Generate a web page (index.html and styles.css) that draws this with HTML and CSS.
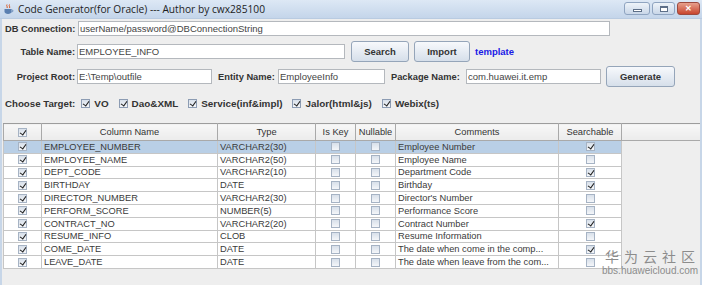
FILE: index.html
```html
<!DOCTYPE html>
<html lang="en">
<head>
  <meta charset="UTF-8" />
  <title>Code Generator(for Oracle)</title>
  <link rel="stylesheet" href="styles.css">
</head>
<body>
  <div class="window">
    <!-- Title bar -->
    <div class="titlebar">
      <svg class="app-icon" width="11" height="11" viewBox="0 0 11 11">
        <path d="M4 0.5 C3 2 5 2.5 4 4" stroke="#d9541e" stroke-width="1" fill="none"/>
        <path d="M6.5 0.5 C5.5 2 7.5 2.5 6.5 4" stroke="#d9541e" stroke-width="1" fill="none"/>
        <path d="M1.5 5 H8.5 V7.5 C8.5 9 7 10 5 10 C3 10 1.5 9 1.5 7.5 Z" fill="#5a7fb0"/>
        <path d="M8.5 5.8 C10.5 5.8 10.5 8 8.3 8" stroke="#5a7fb0" stroke-width="0.9" fill="none"/>
      </svg>
      <span class="title">Code Generator(for Oracle) --- Author by cwx285100</span>
      <div class="win-btns">
        <span class="win-btn btn-min"><i></i></span>
        <span class="win-btn btn-max"><i></i></span>
        <span class="win-btn btn-close">&#x2715;</span>
      </div>
    </div>

    <div class="content">
      <!-- DB connection -->
      <div class="form-row row-db">
        <label class="lbl">DB Connection:</label>
        <input class="field f-db" type="text" value="userName/password@DBConnectionString">
      </div>
      <!-- Table name -->
      <div class="form-row row-btn">
        <label class="lbl">Table Name:</label>
        <input class="field f-table" type="text" value="EMPLOYEE_INFO">
        <button class="btn btn-search">Search</button>
        <button class="btn btn-import">Import</button>
        <a class="link" href="#">template</a>
      </div>
      <!-- Project / entity / package -->
      <div class="form-row row-btn">
        <label class="lbl">Project Root:</label>
        <input class="field f-root" type="text" value="E:\Temp\outfile">
        <label class="lbl-inline lbl-entity">Entity Name:</label>
        <input class="field f-entity" type="text" value="EmployeeInfo">
        <label class="lbl-inline lbl-pkg">Package Name:</label>
        <input class="field f-pkg" type="text" value="com.huawei.it.emp">
        <button class="btn btn-gen">Generate</button>
      </div>
      <!-- Targets -->
      <div class="form-row row-targets">
        <span class="lbl-target">Choose Target:</span>
        <span class="target"><span class="cb on"></span>VO</span>
        <span class="target"><span class="cb on"></span>Dao&amp;XML</span>
        <span class="target"><span class="cb on"></span>Service(inf&amp;impl)</span>
        <span class="target"><span class="cb on"></span>Jalor(html&amp;js)</span>
        <span class="target"><span class="cb on"></span>Webix(ts)</span>
      </div>

      <!-- Column grid -->
      <div class="grid-pane">
        <table class="grid">
          <colgroup>
            <col class="c-sel"><col class="c-name"><col class="c-type"><col class="c-key">
            <col class="c-null"><col class="c-comm"><col class="c-srch"><col>
          </colgroup>
          <thead>
            <tr>
              <th><span class="cb on"></span></th>
              <th>Column Name</th>
              <th>Type</th>
              <th>Is Key</th>
              <th>Nullable</th>
              <th>Comments</th>
              <th>Searchable</th>
              <th class="filler"></th>
            </tr>
          </thead>
          <tbody>
            <tr class="selected">
              <td class="ck"><span class="cb on"></span></td><td>EMPLOYEE_NUMBER</td><td>VARCHAR2(30)</td>
              <td class="ck"><span class="cb"></span></td><td class="ck"><span class="cb"></span></td>
              <td>Employee Number</td><td class="ck"><span class="cb on"></span></td><td class="filler"></td>
            </tr>
            <tr>
              <td class="ck"><span class="cb on"></span></td><td>EMPLOYEE_NAME</td><td>VARCHAR2(50)</td>
              <td class="ck"><span class="cb"></span></td><td class="ck"><span class="cb"></span></td>
              <td>Employee Name</td><td class="ck"><span class="cb"></span></td><td class="filler"></td>
            </tr>
            <tr>
              <td class="ck"><span class="cb on"></span></td><td>DEPT_CODE</td><td>VARCHAR2(10)</td>
              <td class="ck"><span class="cb"></span></td><td class="ck"><span class="cb"></span></td>
              <td>Department Code</td><td class="ck"><span class="cb on"></span></td><td class="filler"></td>
            </tr>
            <tr>
              <td class="ck"><span class="cb on"></span></td><td>BIRTHDAY</td><td>DATE</td>
              <td class="ck"><span class="cb"></span></td><td class="ck"><span class="cb"></span></td>
              <td>Birthday</td><td class="ck"><span class="cb on"></span></td><td class="filler"></td>
            </tr>
            <tr>
              <td class="ck"><span class="cb on"></span></td><td>DIRECTOR_NUMBER</td><td>VARCHAR2(30)</td>
              <td class="ck"><span class="cb"></span></td><td class="ck"><span class="cb"></span></td>
              <td>Director's Number</td><td class="ck"><span class="cb"></span></td><td class="filler"></td>
            </tr>
            <tr>
              <td class="ck"><span class="cb on"></span></td><td>PERFORM_SCORE</td><td>NUMBER(5)</td>
              <td class="ck"><span class="cb"></span></td><td class="ck"><span class="cb"></span></td>
              <td>Performance Score</td><td class="ck"><span class="cb"></span></td><td class="filler"></td>
            </tr>
            <tr>
              <td class="ck"><span class="cb on"></span></td><td>CONTRACT_NO</td><td>VARCHAR2(20)</td>
              <td class="ck"><span class="cb"></span></td><td class="ck"><span class="cb"></span></td>
              <td>Contract Number</td><td class="ck"><span class="cb on"></span></td><td class="filler"></td>
            </tr>
            <tr>
              <td class="ck"><span class="cb on"></span></td><td>RESUME_INFO</td><td>CLOB</td>
              <td class="ck"><span class="cb"></span></td><td class="ck"><span class="cb"></span></td>
              <td>Resume Information</td><td class="ck"><span class="cb"></span></td><td class="filler"></td>
            </tr>
            <tr>
              <td class="ck"><span class="cb on"></span></td><td>COME_DATE</td><td>DATE</td>
              <td class="ck"><span class="cb"></span></td><td class="ck"><span class="cb"></span></td>
              <td>The date when come in the comp...</td><td class="ck"><span class="cb on"></span></td><td class="filler"></td>
            </tr>
            <tr>
              <td class="ck"><span class="cb on"></span></td><td>LEAVE_DATE</td><td>DATE</td>
              <td class="ck"><span class="cb"></span></td><td class="ck"><span class="cb"></span></td>
              <td>The date when leave from the com...</td><td class="ck"><span class="cb"></span></td><td class="filler"></td>
            </tr>
          </tbody>
        </table>
      </div>
    </div>

    <!-- Site watermark -->
    <div class="watermark">
      <div class="wm-cn"><span>华</span><span>为</span><span>云</span><span>社</span><span>区</span></div>
      <div class="wm-url">bbs.huaweicloud.com</div>
    </div>
  </div>
</body>
</html>
```

FILE: styles.css
```css
* {
  margin: 0;
  padding: 0;
  box-sizing: border-box;
}
html, body {
  width: 702px;
  height: 285px;
  overflow: hidden;
}
body {
  font-family: 'Liberation Sans', Arial, sans-serif;
  background: #eeeeee;
  color: #333;
}
.window {
  position: relative;
  height: 285px;
  display: flex;
  flex-direction: column;
}
/* Title bar */
.titlebar {
  height: 19px;
  display: flex;
  align-items: center;
  padding-left: 3px;
  background: linear-gradient(#dde8f5, #c4d5ea);
  border-bottom: 1px solid #b9cbe1;
}
.app-icon {
  flex: none;
}
.title {
  margin-left: 4px;
  font-family: 'Open Sans', 'Liberation Sans', sans-serif;
  font-size: 10.2px;
  color: #1d1d1d;
  white-space: nowrap;
}
.win-btns {
  margin-left: auto;
  display: flex;
  gap: 2px;
  margin-right: 2px;
  align-self: flex-start;
  margin-top: 2px;
}
.win-btn {
  height: 13px;
  border: 1px solid #8fa4c0;
  border-radius: 3px;
  background: linear-gradient(#eef3f9, #c9d7e8);
  display: flex;
  align-items: center;
  justify-content: center;
}
.btn-min {
  width: 26px;
}
.btn-min i {
  display: block;
  width: 9px;
  height: 3px;
  margin-top: 4px;
  background: #fff;
  border: 1px solid #5d6f88;
}
.btn-max {
  width: 23px;
}
.btn-max i {
  display: block;
  width: 8px;
  height: 6px;
  border: 1px solid #5d6f88;
  border-top-width: 2px;
  background: #fff;
}
.btn-close {
  width: 23px;
  border-color: #9c4a3f;
  background: linear-gradient(#e7a08c, #c8452e);
  color: #fff;
  font-size: 8px;
  font-weight: bold;
}
/* Main area */
.content {
  flex: 1;
  border-left: 2px solid #c7d6e8;
  border-right: 2px solid #c7d6e8;
  padding-left: 3px;
  display: flex;
  flex-direction: column;
}
.form-row {
  display: flex;
  align-items: center;
}
.row-db {
  height: 15px;
  margin-top: 2px;
}
.row-btn {
  height: 21px;
  margin-top: 5px;
}
.row-btn + .row-btn {
  margin-top: 4px;
}
.row-targets {
  height: 14px;
  margin-top: 9px;
}
.lbl, .lbl-inline, .lbl-target {
  font-size: 9.3px;
  font-weight: bold;
  color: #333;
  white-space: nowrap;
}
.lbl {
  width: 70px;
  text-align: right;
  margin-right: 2px;
}
.field {
  height: 15px;
  border: 1px solid #b4b8bd;
  background: #fff;
  font-family: 'Liberation Sans', Arial, sans-serif;
  font-size: 9.5px;
  color: #444;
  padding: 0 1px;
  outline: none;
}
.f-db {
  width: 532px;
  margin-left: 1px;
}
.f-table {
  width: 268px;
}
.f-root {
  width: 135px;
}
.f-entity {
  width: 107px;
}
.f-pkg {
  width: 135px;
}
.lbl-entity {
  margin-left: 6px;
  width: 57px;
  margin-right: 3px;
}
.lbl-pkg {
  margin-left: 6px;
  width: 72px;
  margin-right: 3px;
}
.btn {
  height: 21px;
  border: 1px solid #95a5b9;
  border-radius: 3px;
  background: linear-gradient(#f7f9fc, #d6dfea);
  font-family: 'Liberation Sans', Arial, sans-serif;
  font-size: 9.5px;
  font-weight: bold;
  color: #333;
}
.btn-search {
  width: 58px;
  margin-left: 6px;
}
.btn-import {
  width: 56px;
  margin-left: 5px;
}
.btn-gen {
  width: 69px;
  margin-left: 5px;
}
.link {
  margin-left: 5px;
  font-size: 9.5px;
  font-weight: bold;
  color: #1a1ae6;
  text-decoration: none;
}
/* Target checkboxes */
.lbl-target {
  font-size: 9.7px;
  margin-right: 6px;
}
.target {
  display: flex;
  align-items: center;
  gap: 4px;
  margin-right: 10px;
  font-size: 9.9px;
  font-weight: bold;
  color: #333;
  white-space: nowrap;
}
.cb {
  position: relative;
  display: inline-block;
  width: 9px;
  height: 9px;
  border: 1px solid #a6b3c4;
  background: linear-gradient(#d8e0ea, #f4f6f9);
  vertical-align: middle;
}
.cb.on::after {
  content: '';
  position: absolute;
  left: 2px;
  top: 0;
  width: 3px;
  height: 5px;
  border: solid #1f1f1f;
  border-width: 0 1.5px 1.5px 0;
  transform: rotate(35deg);
}
.target .cb {
  border-color: #8c9cb3;
}
/* Grid */
.grid-pane {
  margin-top: 13px;
  margin-left: -2px;
  flex: 1;
  overflow: hidden;
}
.grid {
  width: 100%;
  border-collapse: collapse;
  table-layout: fixed;
  font-size: 9.3px;
}
.c-sel { width: 38px; }
.c-name { width: 176px; }
.c-type { width: 98px; }
.c-key { width: 40px; }
.c-null { width: 40px; }
.c-comm { width: 163px; }
.c-srch { width: 63px; }
.grid thead tr {
  height: 17px;
}
.grid th {
  font-weight: normal;
  color: #333;
  background: linear-gradient(#f7f7f7, #ebebeb);
  border: 1px solid #a9a9a9;
  border-top-color: #9c9c9c;
  text-align: center;
  white-space: nowrap;
  overflow: hidden;
}
.grid th.filler {
  border-right: none;
}
.grid tbody tr {
  height: 12.8px;
}
.grid td {
  padding: 0 1px 0 2px;
  background: #fff;
  border: 1px solid #c6c6c6;
  color: #3a3a3a;
  white-space: nowrap;
  overflow: hidden;
  line-height: 10px;
}
.grid td.ck {
  text-align: center;
  padding: 0;
}
.grid td .cb {
  display: block;
  margin: 0 auto;
}
.grid td.filler {
  background: #eeeeee;
  border: none;
  border-left: 1px solid #c6c6c6;
}
.grid tr.selected td {
  background: #b9cfe6;
}
.grid tr.selected td.filler {
  background: #eeeeee;
}
/* Watermark overlay */
.watermark {
  position: absolute;
  right: 4px;
  bottom: 8px;
  width: 96px;
  color: #8c8c8c;
}
.wm-cn {
  display: flex;
  justify-content: space-between;
  padding: 0 3px 0 3px;
  font-family: 'Noto Sans CJK SC', sans-serif;
  font-size: 14px;
  line-height: 17px;
}
.wm-url {
  text-align: center;
  font-family: 'Liberation Sans', Arial, sans-serif;
  font-size: 10px;
  line-height: 12px;
  white-space: nowrap;
}
```
